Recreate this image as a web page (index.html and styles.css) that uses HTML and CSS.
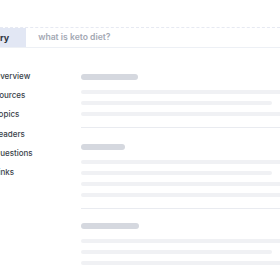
FILE: index.html
```html
<!DOCTYPE html>
<html lang="en">
<head>
    <meta charset="UTF-8">
    <title>Query</title>
    <link rel="stylesheet" href="styles.css">
</head>
<body>
    <div class="topbar">
        <div class="tab">Query</div>
        <div class="search">what is keto diet?</div>
    </div>

    <div class="main">
        <ul class="sidebar">
            <li>Overview</li>
            <li>Sources</li>
            <li>Topics</li>
            <li>Leaders</li>
            <li>Questions</li>
            <li>Links</li>
        </ul>

        <div class="content">
            <div class="section">
                <div class="title-bar" style="width: 57px"></div>
                <div class="line"></div>
                <div class="line short"></div>
                <div class="line"></div>
            </div>
            <div class="section">
                <div class="title-bar" style="width: 44px"></div>
                <div class="line"></div>
                <div class="line short"></div>
                <div class="line"></div>
                <div class="line"></div>
            </div>
            <div class="section">
                <div class="title-bar" style="width: 58px"></div>
                <div class="line"></div>
                <div class="line short"></div>
                <div class="line"></div>
            </div>
        </div>
    </div>
</body>
</html>
```

FILE: styles.css
```css
body {
    margin: 0;
    font-family: Inter, "Noto Sans", sans-serif;
    background-color: #ffffff;
    overflow: hidden;
}
.topbar {
    display: flex;
    margin-top: 27px;
    height: 19px;
    border-top: 1px dashed #e6e9f2;
    border-bottom: 1px solid #edf0f5;
    font-size: 9px;
    line-height: 19px;
}
.tab {
    margin-left: -30px;
    padding: 0 17px 0 12px;
    background-color: #e2e7f4;
    color: #2d3340;
    font-weight: 700;
}
.search {
    padding-left: 12px;
    color: #a3a8b3;
    font-weight: 600;
    font-size: 8.6px;
}
.main {
    display: flex;
}
.sidebar {
    list-style: none;
    margin: 0 0 0 -6px;
    padding: 19px 0 0 0;
    width: 87px;
    flex-shrink: 0;
    font-size: 8px;
    line-height: 19.2px;
    color: #3a3f4a;
    font-weight: 500;
}
.content {
    width: 210px;
    flex-shrink: 0;
    padding-top: 10px;
}
.section {
    padding: 16px 0 11px 0;
    border-bottom: 1px solid #e9ebf0;
}
.section:last-child {
    padding-top: 14px;
    border-bottom: none;
}
.title-bar {
    height: 6px;
    border-radius: 3px;
    background-color: #d5d8df;
    margin-bottom: 10px;
}
.line {
    height: 4px;
    border-radius: 2px;
    background-color: #f0f1f4;
    margin-bottom: 7px;
}
.line:last-child {
    margin-bottom: 0;
}
.line.short {
    width: 191px;
}
```
